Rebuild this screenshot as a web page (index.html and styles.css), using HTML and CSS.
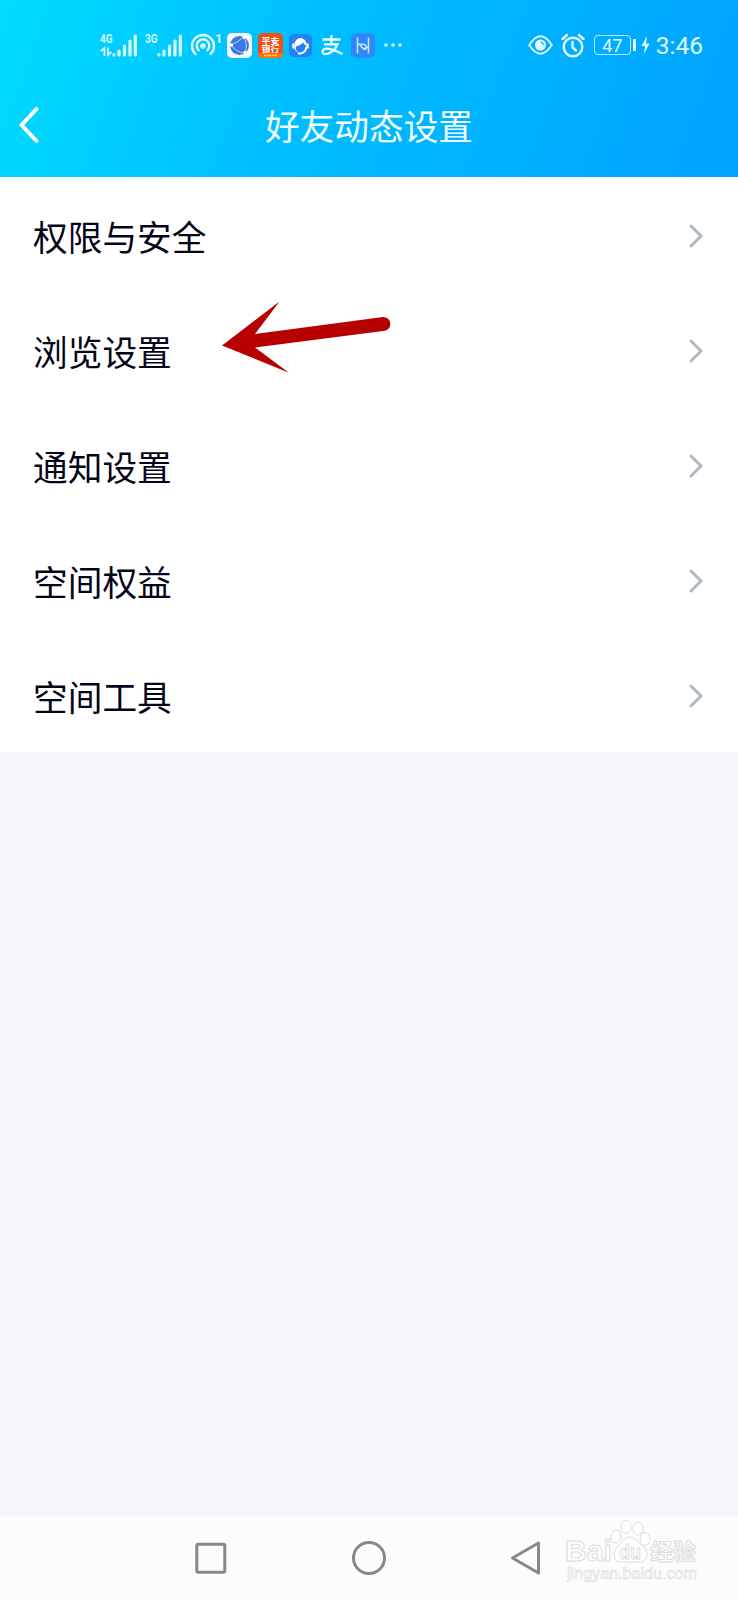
FILE: index.html
```html
<!DOCTYPE html>
<html lang="zh-CN">
<head>
    <meta charset="UTF-8">
    <meta name="viewport" content="width=device-width, initial-scale=1.0">
    <title>好友动态设置</title>
    <link rel="stylesheet" href="styles.css">
</head>
<body>
    <div class="phone">
        <header class="header">
            <div class="status-bar">
                <div class="status-left">
                    <svg class="signal" width="37" height="26" viewBox="0 0 37 26">
                        <text x="0" y="11" class="net" textLength="12.5" lengthAdjust="spacingAndGlyphs">4G</text>
                        <path d="M1 19L4.500 16V24M8 15.500V23L11.500 20" class="thin"/>
                        <path d="M14 22.500v.5M19 19v4M24.500 14v9M30 9v14M35.300 4v19" class="bars"/>
                    </svg>
                    <svg class="signal" width="37" height="26" viewBox="0 0 37 26">
                        <text x="0" y="11" class="net" textLength="12.5" lengthAdjust="spacingAndGlyphs">3G</text>
                        <path d="M14 22.500v.5M19 19v4M24.500 14v9M30 9v14M35.300 4v19" class="bars"/>
                    </svg>
                    <svg class="hotspot" width="34" height="26" viewBox="0 0 34 26">
                        <path d="M5.500 22A11 11 0 1 1 20.500 22M8.700 18.300A6.300 6.300 0 1 1 17.300 18.300" class="line"/>
                        <circle cx="13" cy="14" r="2.800" fill="#d4faff"/>
                        <text x="25" y="11" class="net">1</text>
                    </svg>
                    <svg class="app" width="25" height="25" viewBox="0 0 25 25">
                        <rect width="25" height="25" rx="5" fill="#f4fcff"/>
                        <circle cx="12.500" cy="12.500" r="9.500" fill="#3c78e0"/>
                        <path d="M4 12Q10 10 17 3.500M4 12Q10 20 18 20M17 4.500Q21 11 18 20" fill="none" stroke="#b8d8ff" stroke-width="1"/>
                        <circle cx="4.500" cy="12" r="1.700" fill="#fff"/>
                        <circle cx="17" cy="4.500" r="1.500" fill="#fff"/>
                        <circle cx="18" cy="19.500" r="1.700" fill="#fff"/>
                    </svg>
                    <svg class="app" width="25" height="25" viewBox="0 0 25 25">
                        <rect width="25" height="25" rx="5" fill="#f05018"/>
                        <path d="M0 20H25a5 5 0 0 1-5 5H5a5 5 0 0 1-5-5z" fill="#ff7200"/>
                        <text x="12.500" y="10.500" class="bank" textLength="18" lengthAdjust="spacingAndGlyphs">平安</text>
                        <text x="12.500" y="18.500" class="bank" textLength="18" lengthAdjust="spacingAndGlyphs">银行</text>
                        <path d="M6 22.500H19" stroke="#ffd9a0" stroke-width="1.400" stroke-dasharray="2 .7"/>
                    </svg>
                    <svg class="app" width="23" height="25" viewBox="0 0 23 25">
                        <rect y="1" width="23" height="23" rx="5" fill="#2681f4"/>
                        <path d="M5.500 11.500a6 6.500 0 0 1 12 0v1q-2-.5-3.500-3-3 3.500-7 4v3.500l3 3q-4.500-2-4.500-6z" fill="#fff"/>
                        <path d="M4.500 11.500v3M18.500 11.500v3" stroke="#fff" stroke-width="2.500" stroke-linecap="round"/>
                        <path d="M17.300 14q-.5 5.500-5.800 6.500H9" fill="none" stroke="#fff" stroke-width="1.800"/>
                    </svg>
                    <svg class="pay" width="24" height="25" viewBox="0 0 24 25">
                        <path d="M2.500 6.500H20.500M11.500 2V11M4 11.300H17.500Q14.500 18.500 8 20.700Q2.500 22 2.500 18.500Q3 15.300 7.500 15.700Q13 16.300 22.500 21" fill="none" stroke="#ecfdff" stroke-width="2.300"/>
                    </svg>
                    <svg class="app" width="24" height="25" viewBox="0 0 24 25">
                        <rect y="0.500" width="24" height="24" rx="5" fill="#2f86fa"/>
                        <path d="M6.500 4.500V20.500M17.500 4.500V20.500M6.500 10q1.500 2.500 5 1.500t3.500 3-4 0 1-3M13 15.500q3.500 0 4.500-2.500" fill="none" stroke="#c3e6ff" stroke-width="1.500"/>
                    </svg>
                    <svg class="more" width="18" height="6" viewBox="0 0 18 6">
                        <circle cx="2" cy="3" r="1.800" fill="#e0fbff"/>
                        <circle cx="9" cy="3" r="1.800" fill="#e0fbff"/>
                        <circle cx="16" cy="3" r="1.800" fill="#e0fbff"/>
                    </svg>
                </div>
                <div class="status-right">
                    <svg class="eye" width="25" height="20" viewBox="0 0 25 20">
                        <path d="M1.200 10Q12.500-7.500 23.800 10Q12.500 27.500 1.200 10z" class="line eye-line"/>
                        <circle cx="12.500" cy="10" r="5.500" fill="#e0fbff"/>
                        <path d="M12.500 7.300a2.700 2.700 0 0 1 2.700 2.700" fill="none" stroke="#00aaff" stroke-width="1.100"/>
                    </svg>
                    <svg class="alarm" width="24" height="25" viewBox="0 0 24 25">
                        <circle cx="12" cy="14" r="9.300" class="line"/>
                        <path d="M1.500 6L6 2M22.500 6L18 2M11.500 9v5.500l3.500 3" class="line"/>
                    </svg>
                    <div class="battery">47</div>
                    <svg class="bolt" width="9" height="18" viewBox="0 0 9 18">
                        <path d="M6 0L0.500 10H4L3 18L8.500 7.500H5z" fill="#e0fbff"/>
                    </svg>
                    <span class="time">3:46</span>
                </div>
            </div>
            <div class="title-bar">
                <svg class="back" width="22" height="40" viewBox="0 0 22 40">
                    <path d="M18.500 4L3.500 20L18.500 36"/>
                </svg>
                <h1 class="title">好友动态设置</h1>
            </div>
        </header>

        <main class="list">
            <div class="row">
                <span>权限与安全</span>
                <svg class="chevron" width="16" height="26" viewBox="0 0 16 26"><path d="M3 3L13 13L3 23"/></svg>
            </div>
            <div class="row">
                <span>浏览设置</span>
                <svg class="arrow" width="172" height="76" viewBox="0 0 172 76">
                    <path d="M1 45.500L58.500 1.500L34 34L162 17a7 7 0 0 1 2 13.800L34 47.500L68 72.800z" fill="#b90000"/>
                </svg>
                <svg class="chevron" width="16" height="26" viewBox="0 0 16 26"><path d="M3 3L13 13L3 23"/></svg>
            </div>
            <div class="row">
                <span>通知设置</span>
                <svg class="chevron" width="16" height="26" viewBox="0 0 16 26"><path d="M3 3L13 13L3 23"/></svg>
            </div>
            <div class="row">
                <span>空间权益</span>
                <svg class="chevron" width="16" height="26" viewBox="0 0 16 26"><path d="M3 3L13 13L3 23"/></svg>
            </div>
            <div class="row">
                <span>空间工具</span>
                <svg class="chevron" width="16" height="26" viewBox="0 0 16 26"><path d="M3 3L13 13L3 23"/></svg>
            </div>
        </main>

        <footer class="nav">
            <svg class="nav-icon" width="36" height="36" viewBox="0 0 36 36"><rect x="3.800" y="4.300" width="28" height="28" rx="1.500"/></svg>
            <svg class="nav-icon" width="36" height="36" viewBox="0 0 36 36"><circle cx="18" cy="18" r="15.500"/></svg>
            <svg class="nav-icon" width="36" height="36" viewBox="0 0 36 36"><path d="M3.500 18L29.500 3V33z"/></svg>
            <svg class="watermark" width="140" height="70" viewBox="0 0 140 70">
                <text x="4" y="42" class="logo" textLength="47" lengthAdjust="spacingAndGlyphs">Bai</text>
                <ellipse cx="55" cy="17.500" rx="4.800" ry="6.500"/>
                <ellipse cx="65" cy="8" rx="5" ry="6.500"/>
                <ellipse cx="77" cy="9.500" rx="5" ry="6.500"/>
                <ellipse cx="84" cy="20" rx="5" ry="6.500"/>
                <path d="M60 24Q69 12 78 24Q87 30 86 37Q84 44 76 43H62Q54 44 53 37Q53 30 60 24z"/>
                <text x="58" y="40" class="du" textLength="22" lengthAdjust="spacingAndGlyphs">du</text>
                <text x="89" y="41" class="cn">经验</text>
                <text x="6" y="60" class="site" textLength="130" lengthAdjust="spacingAndGlyphs">jingyan.baidu.com</text>
            </svg>
        </footer>
    </div>
</body>
</html>
```

FILE: styles.css
```css
* {
    box-sizing: border-box;
}
body {
    margin: 0;
    font-family: Roboto, "Noto Sans CJK SC", sans-serif;
    background-color: #f4f6fa;
}
svg {
    flex: none;
    display: block;
}
.phone {
    width: 738px;
    height: 1600px;
    display: flex;
    flex-direction: column;
}
.header {
    height: 177px;
    background: linear-gradient(110deg, #00dcff 0%, #00beff 40%, #00a2ff 100%);
}
.status-bar {
    height: 78px;
    padding: 12px 35px 0 100px;
    display: flex;
    align-items: center;
    justify-content: space-between;
}
.status-left,
.status-right {
    display: flex;
    align-items: center;
}
.signal {
    margin-right: 8px;
}
.net {
    font-size: 13px;
    font-weight: 700;
    fill: #d4faff;
}
.thin {
    fill: none;
    stroke: #d4faff;
    stroke-width: 1.8;
}
.bars {
    stroke: #d4faff;
    stroke-width: 3.2;
    stroke-linecap: round;
}
.line {
    fill: none;
    stroke: #e0fbff;
    stroke-width: 2.4;
    stroke-linecap: round;
}
.eye-line {
    stroke-width: 1.8;
}
.hotspot {
    margin-right: 3px;
    overflow: visible;
}
.app {
    margin-right: 6px;
}
.bank {
    font-family: "Noto Sans CJK SC", sans-serif;
    font-size: 8px;
    font-weight: 700;
    text-anchor: middle;
    fill: #fff;
}
.pay {
    margin: 0 7px 0 2px;
}
.more {
    margin-left: 3px;
}
.eye {
    margin-right: 8px;
}
.alarm {
    margin-right: 9px;
}
.battery {
    position: relative;
    width: 37px;
    height: 20px;
    margin-right: 10px;
    border: 1px solid #b8f2ff;
    border-radius: 4px;
    color: #e0fbff;
    font-size: 18px;
    line-height: 19px;
    text-align: center;
}
.battery::after {
    content: "";
    position: absolute;
    right: -6px;
    top: 3px;
    width: 3px;
    height: 12px;
    background-color: #e0fbff;
}
.bolt {
    margin-right: 6px;
}
.time {
    padding-top: 2px;
    font-size: 24.5px;
    line-height: 30px;
    color: #e0fbff;
}
.title-bar {
    height: 99px;
    display: grid;
    grid-template-columns: 60px 1fr 60px;
    align-items: center;
}
.back {
    margin: 0 0 5px 18px;
    fill: none;
    stroke: #fff;
    stroke-width: 4;
    stroke-linecap: round;
    stroke-linejoin: round;
}
.title {
    margin: 0 0 5px;
    font-family: "Noto Sans CJK SC", sans-serif;
    font-size: 34.7px;
    font-weight: 400;
    line-height: 50px;
    text-align: center;
    color: #f0feff;
}
.list {
    height: 575px;
    display: flex;
    flex-direction: column;
    background-color: #fff;
}
.row {
    flex: 1;
    padding: 3px 33px 0;
    display: flex;
    align-items: center;
    font-family: "Noto Sans CJK SC", sans-serif;
    font-size: 34.7px;
    line-height: 50px;
    color: #05051a;
}
.chevron {
    margin: 0 1px 1px auto;
    fill: none;
    stroke: #b0b9c2;
    stroke-width: 3;
    stroke-linecap: round;
}
.arrow {
    margin: -26px 0 0 49px;
}
.nav {
    position: relative;
    height: 84px;
    margin-top: auto;
    display: flex;
    justify-content: center;
    align-items: center;
    gap: 122px;
    background-color: #fcfcfc;
}
.nav-icon {
    fill: none;
    stroke: #888;
    stroke-width: 3;
    stroke-linejoin: round;
}
.watermark {
    position: absolute;
    left: 561px;
    top: 3px;
    fill: #fefefe;
    stroke: #dcdcdc;
    stroke-width: 1;
}
.logo {
    font-family: "Liberation Sans", sans-serif;
    font-size: 30px;
    font-weight: 700;
}
.du {
    font-family: "Liberation Sans", sans-serif;
    font-size: 20px;
    font-weight: 700;
}
.cn {
    font-family: "Noto Sans CJK SC", sans-serif;
    font-size: 23px;
    font-weight: 700;
}
.site {
    font-family: "Liberation Sans", sans-serif;
    font-size: 16px;
    stroke-width: 0.6;
}
```
